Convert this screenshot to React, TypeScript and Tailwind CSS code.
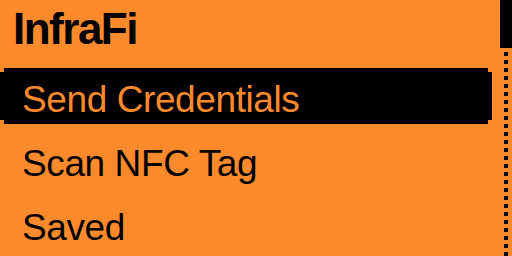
import React from 'react';

// Flipper-style submenu screen, 128x64 LCD drawn at 4x
const items = ['Send Credentials', 'Scan NFC Tag', 'Saved'];

const font = "font-['Liberation_Sans',Arial,sans-serif]";

export default function App() {
  const selected = 0;

  return (
    <div className="w-[512px] h-[256px] bg-[#fe8a2c] flex overflow-hidden select-none">
      <div className="w-[500px] flex flex-col">
        <div className="h-16 pt-[7px] pl-[13px]">
          <span className={`${font} font-bold text-[44px] leading-[44px] tracking-[-1.5px] text-black`}>
            InfraFi
          </span>
        </div>

        {items.map((label, i) => {
          const on = i === selected;
          return (
            <div key={label} className="h-16 py-1 flex">
              {/* pixel-cut corners: narrow caps on each side */}
              <div className={on ? 'w-1 py-1' : 'w-1'}>
                {on && <div className="h-full bg-black" />}
              </div>
              <div className={on ? 'w-[484px] bg-black pt-[13px] pl-[18px]' : 'w-[484px] pt-[13px] pl-[18px]'}>
                <span
                  className={`${font} text-[37px] leading-[37px] tracking-[-0.4px] whitespace-nowrap ${
                    on ? 'text-[#fe8a2c]' : 'text-black'
                  }`}
                >
                  {label}
                </span>
              </div>
              <div className={on ? 'w-1 py-1' : 'w-1'}>
                {on && <div className="h-full bg-black" />}
              </div>
            </div>
          );
        })}
      </div>

      {/* scrollbar */}
      <div className="w-3 flex flex-col">
        <div className="h-12 bg-black" />
        <div className="flex-1 flex justify-center">
          <div className="w-1 h-full bg-[repeating-linear-gradient(to_bottom,transparent_0,transparent_4px,#000_4px,#000_8px)]" />
        </div>
      </div>
    </div>
  );
}
